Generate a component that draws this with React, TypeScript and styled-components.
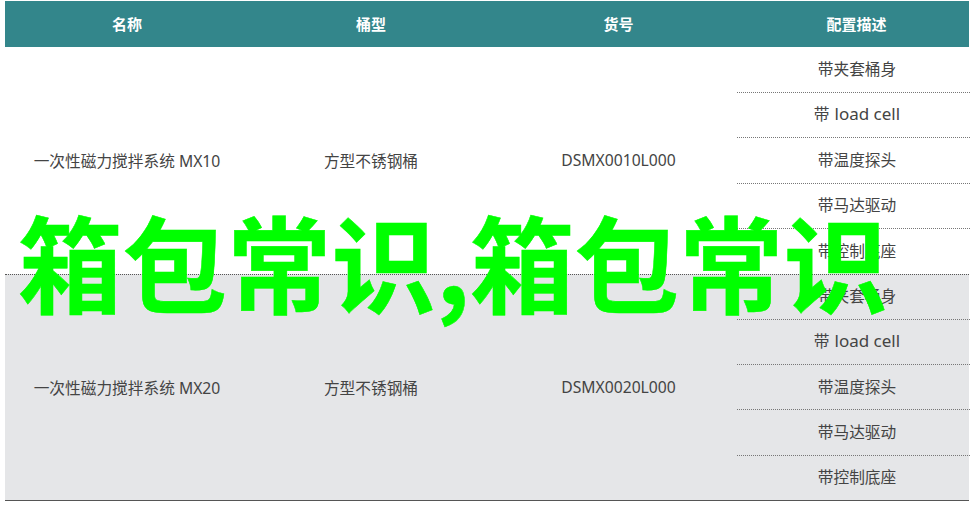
import React from "react";
import styled, { createGlobalStyle } from "styled-components";

const Global = createGlobalStyle`
  html, body { margin: 0; padding: 0; background: #fff; }
  body { font-family: "Noto Sans", "Noto Sans CJK SC", sans-serif; }
  #root { width: 973px; height: 505px; overflow: hidden; }
`;

const Page = styled.div`
  position: relative;
  width: 973px;
  height: 505px;
  padding: 1px 4px 0 5px;
  box-sizing: border-box;
  overflow: hidden;
`;

const Columns = "244px 244px 244px 232px";

const HeaderRow = styled.div`
  display: grid;
  grid-template-columns: ${Columns};
  height: 46px;
  padding-bottom: 2px;
  box-sizing: border-box;
  background: #33868b;
  align-items: center;
  text-align: center;
  color: #fff;
  font-size: 15px;
  font-weight: 700;
`;

const HeaderCell = styled.div<{ $shift?: number }>`
  padding-left: ${(p) => p.$shift ?? 0}px;
`;

const Group = styled.div<{ $shaded?: boolean }>`
  display: grid;
  grid-template-columns: ${Columns};
  height: 226.5px;
  box-sizing: border-box;
  background: ${(p) => (p.$shaded ? "#e5e6e8" : "#fff")};
  border-top: ${(p) => (p.$shaded ? "1px dotted #555" : "none")};
  color: #444;
  font-size: 15.7px;
`;

const Cell = styled.div<{ $shift?: number }>`
  display: flex;
  align-items: center;
  justify-content: center;
  padding-left: ${(p) => p.$shift ?? 0}px;
`;

const Options = styled.div`
  display: flex;
  flex-direction: column;
  margin-right: -1px;
`;

const Option = styled.div`
  flex: 1;
  display: flex;
  align-items: center;
  justify-content: center;
  gap: 5px;
  padding: 0 0 2px 7px;
  border-bottom: 1px dotted #777;
  &:last-child {
    border-bottom: none;
  }
`;

const Latin = styled.span`
  font-size: 17px;
`;

const Footer = styled.div`
  height: 1px;
  background: #555;
`;

const Overlay = styled.div`
  position: absolute;
  left: 18px;
  top: 190px;
  white-space: nowrap;
  color: #00ff00;
  font-family: "Noto Sans CJK SC", sans-serif;
  font-size: 104.5px;
  line-height: 140px;
  font-weight: 700;
  -webkit-text-stroke: 0.5px #00ff00;
`;

const options: [string, string?][] = [
  ["带夹套桶身"],
  ["带", "load cell"],
  ["带温度探头"],
  ["带马达驱动"],
  ["带控制底座"],
];
const products = [
  { name: "一次性磁力搅拌系统 MX10", sku: "DSMX0010L000" },
  { name: "一次性磁力搅拌系统 MX20", sku: "DSMX0020L000" },
];

export default function App() {
  return (
    <Page>
      <Global />
      <HeaderRow>
        <HeaderCell>名称</HeaderCell>
        <HeaderCell>桶型</HeaderCell>
        <HeaderCell $shift={7}>货号</HeaderCell>
        <HeaderCell $shift={7}>配置描述</HeaderCell>
      </HeaderRow>
      {products.map((p, i) => (
        <Group key={p.sku} $shaded={i === 1}>
          <Cell>{p.name}</Cell>
          <Cell>方型不锈钢桶</Cell>
          <Cell $shift={7}>{p.sku}</Cell>
          <Options>
            {options.map(([cjk, latin], j) => (
              <Option key={j}>
                <span>{cjk}</span>
                {latin && <Latin>{latin}</Latin>}
              </Option>
            ))}
          </Options>
        </Group>
      ))}
      <Footer />
      <Overlay>箱包常识,箱包常识</Overlay>
    </Page>
  );
}
